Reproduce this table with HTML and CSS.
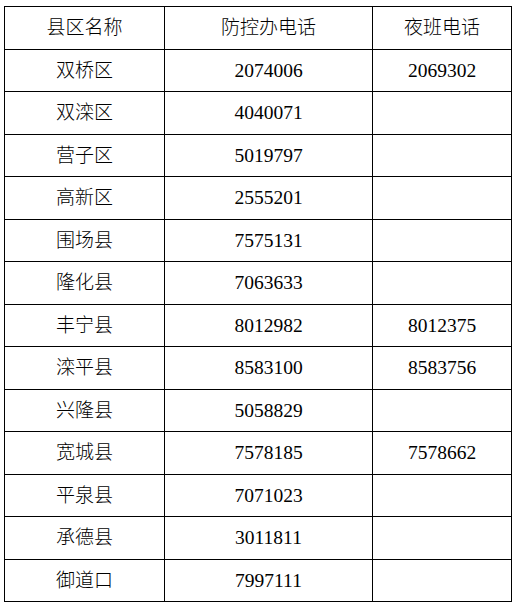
FILE: index.html
```html
<!DOCTYPE html>
<html lang="zh">
<head>
<meta charset="utf-8">
<title>防控办电话</title>
<link rel="stylesheet" href="styles.css">
</head>
<body>
<div class="page">
<table class="phones">
<colgroup><col class="c1"><col class="c2"><col class="c3"></colgroup>
<tr><td>县区名称</td><td>防控办电话</td><td>夜班电话</td></tr>
<tr><td>双桥区</td><td class="num">2074006</td><td class="num">2069302</td></tr>
<tr><td>双滦区</td><td class="num">4040071</td><td></td></tr>
<tr><td>营子区</td><td class="num">5019797</td><td></td></tr>
<tr><td>高新区</td><td class="num">2555201</td><td></td></tr>
<tr><td>围场县</td><td class="num">7575131</td><td></td></tr>
<tr><td>隆化县</td><td class="num">7063633</td><td></td></tr>
<tr><td>丰宁县</td><td class="num">8012982</td><td class="num">8012375</td></tr>
<tr><td>滦平县</td><td class="num">8583100</td><td class="num">8583756</td></tr>
<tr><td>兴隆县</td><td class="num">5058829</td><td></td></tr>
<tr><td>宽城县</td><td class="num">7578185</td><td class="num">7578662</td></tr>
<tr><td>平泉县</td><td class="num">7071023</td><td></td></tr>
<tr><td>承德县</td><td class="num">3011811</td><td></td></tr>
<tr><td>御道口</td><td class="num">7997111</td><td></td></tr>
</table>
</div>
</body>
</html>
```
FILE: styles.css
```css
html, body {
  margin: 0;
  padding: 0;
  background: #fff;
}
.page {
  padding: 6px 0 0 4px;
}
.phones {
  border-collapse: collapse;
  table-layout: fixed;
  width: 507px;
  font-family: "Liberation Serif", "Noto Sans CJK SC", serif;
  font-size: 19px;
  font-weight: 300;
  color: #000;
}
.c1 { width: 160px; }
.c2 { width: 208px; }
.c3 { width: 139px; }
.phones td {
  border: 1px solid #000;
  height: 42.5px;
  padding: 1px 0 0;
  text-align: center;
  vertical-align: middle;
  line-height: 22px;
  box-sizing: border-box;
}
.phones td.num {
  font-size: 19.5px;
  font-weight: 400;
}
```
